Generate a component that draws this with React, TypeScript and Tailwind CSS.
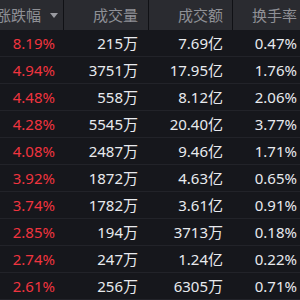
import React from 'react';

type Row = [string, string, string, string];

const rows: Row[] = [
    ['8.19%', '215万', '7.69亿', '0.47%'],
    ['4.94%', '3751万', '17.95亿', '1.76%'],
    ['4.48%', '558万', '8.12亿', '2.06%'],
    ['4.28%', '5545万', '20.40亿', '3.77%'],
    ['4.08%', '2487万', '9.46亿', '1.71%'],
    ['3.92%', '1872万', '4.63亿', '0.65%'],
    ['3.74%', '1782万', '3.61亿', '0.91%'],
    ['2.85%', '194万', '3713万', '0.18%'],
    ['2.74%', '247万', '1.24亿', '0.22%'],
    ['2.61%', '256万', '6305万', '0.71%'],
];

const font = { fontFamily: '"Noto Sans", "Noto Sans CJK SC", sans-serif' };

export default function App() {
    return (
        <div className="w-[300px] h-[300px] overflow-hidden bg-[#16171c] text-[15px]" style={font}>
            {/* Header */}
            <div className="grid grid-cols-[64px_85px_84px_67px] h-[30px] bg-[#2a2b30] text-[#8f9096]">
                <div className="flex items-center justify-end pr-[5px] border-r border-[#101115] overflow-hidden">
                    <span className="whitespace-nowrap">涨跌幅</span>
                    <svg width="8" height="5" viewBox="0 0 8 5" className="ml-[9px] shrink-0">
                        <path d="M0 0H8L4 5Z" fill="#9a9ba1" />
                    </svg>
                </div>
                <div className="flex items-center justify-end pr-[10px] border-r border-[#101115]">成交量</div>
                <div className="flex items-center justify-end pr-[9px] border-r border-[#101115]">成交额</div>
                <div className="flex items-center justify-end pr-[3px] whitespace-nowrap">换手率</div>
            </div>

            {/* Rows */}
            {rows.map((r, i) => (
                <div
                    key={i}
                    className="grid grid-cols-[64px_85px_84px_67px] h-[27px] border-b border-[#222329] text-[#e8eaee]"
                >
                    <div className="flex items-center justify-end pr-[9px] text-[#f0343f]">{r[0]}</div>
                    <div className="flex items-center justify-end pr-[11px]">{r[1]}</div>
                    <div className="flex items-center justify-end pr-[10px]">{r[2]}</div>
                    <div className="flex items-center justify-end pr-[3px]">{r[3]}</div>
                </div>
            ))}
        </div>
    );
}
